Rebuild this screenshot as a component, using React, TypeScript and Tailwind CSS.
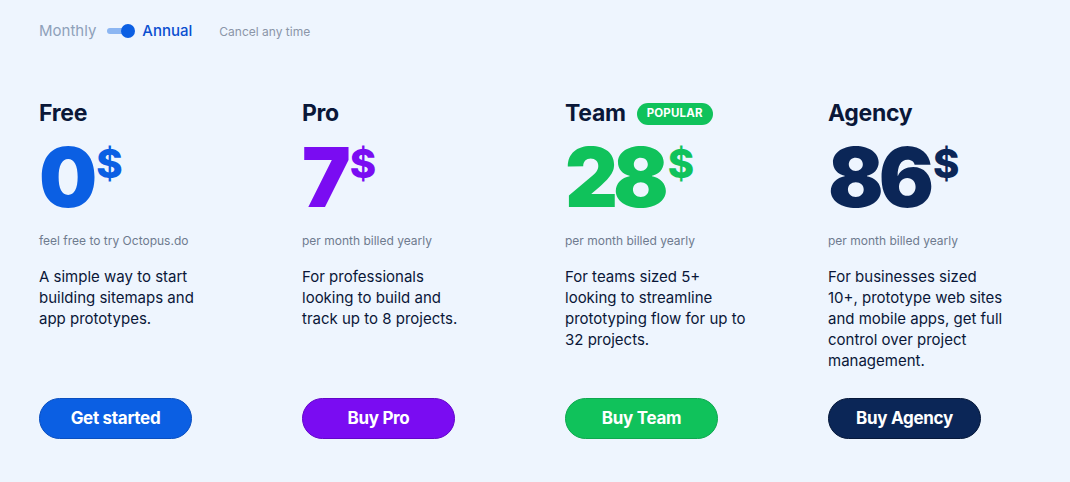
import React from "react";

type Plan = {
  name: string;
  price: string;
  color: string;
  sub: string;
  desc: string;
  descW: string;
  btn: string;
  btnBg: string;
  popular?: boolean;
};

const plans: Plan[] = [
  {
    name: "Free",
    price: "0",
    color: "text-[#0b5fe3]",
    sub: "feel free to try Octopus.do",
    desc: "A simple way to start building sitemaps and app prototypes.",
    descW: "w-[184px]",
    btn: "Get started",
    btnBg: "bg-[#0b5fe3] border-[#0a4fc0]",
  },
  {
    name: "Pro",
    price: "7",
    color: "text-[#7a0cf2]",
    sub: "per month billed yearly",
    desc: "For professionals looking to build and track up to 8 projects.",
    descW: "w-[170px]",
    btn: "Buy Pro",
    btnBg: "bg-[#7a0cf2] border-[#6306c9]",
  },
  {
    name: "Team",
    price: "28",
    color: "text-[#10c25b]",
    sub: "per month billed yearly",
    desc: "For teams sized 5+ looking to streamline prototyping flow for up to 32 projects.",
    descW: "w-[184px]",
    btn: "Buy Team",
    btnBg: "bg-[#10c25b] border-[#0ea84f]",
    popular: true,
  },
  {
    name: "Agency",
    price: "86",
    color: "text-[#0b2657]",
    sub: "per month billed yearly",
    desc: "For businesses sized 10+, prototype web sites and mobile apps, get full control over project management.",
    descW: "w-[178px]",
    btn: "Buy Agency",
    btnBg: "bg-[#0b2657] border-[#06183a]",
  },
];

export default function App() {
  return (
    <div
      className="w-[1070px] h-[482px] bg-[#eef5fe] overflow-hidden"
      style={{ fontFamily: "Inter, 'Noto Sans', sans-serif" }}
    >
      <div className="flex items-center pl-[39px] pt-[20px] h-[22px] box-content">
        <span className="text-[15px] text-[#8fa1ba]">Monthly</span>
        <div className="relative ml-[11px] w-[28px] h-[14px] flex items-center">
          <div className="w-[24px] h-[6px] rounded-full bg-[#8cb6f2]" />
          <div className="absolute right-0 top-0 w-[14px] h-[14px] rounded-full bg-[#0b5fe3]" />
        </div>
        <span className="ml-[7px] text-[15px] font-medium text-[#0a4fd0]">Annual</span>
        <span className="ml-[27px] text-[12px] text-[#8b96a8] mt-[1px]">Cancel any time</span>
      </div>

      <div className="flex pl-[39px] pt-[56px]">
        {plans.map((p) => (
          <div key={p.name} className="w-[263px] shrink-0 flex flex-col">
            <div className="flex items-center h-[30px]">
              <span className="text-[23px] font-bold text-[#0a1738] tracking-[-0.3px]">{p.name}</span>
              {p.popular && (
                <span className="ml-[11px] mt-[1px] h-[22px] px-[10px] rounded-full bg-[#10c25b] text-white text-[11.5px] font-bold flex items-center tracking-[0.2px]">
                  POPULAR
                </span>
              )}
            </div>
            <div className={`flex items-start h-[99px] mt-[4px] ${p.color}`}>
              <span className="text-[82px] font-black leading-none tracking-[-5px] mt-[5px]">{p.price}</span>
              <span className="text-[40px] font-extrabold leading-none ml-[4px] mt-[12px]">$</span>
            </div>
            <div className="text-[12px] text-[#6e7b8f] mt-[1px] h-[20px]">{p.sub}</div>
            <div className={`text-[15px] leading-[21px] text-[#0a1738] mt-[14px] h-[132px] ${p.descW}`}>{p.desc}</div>
            <div>
              <button
                className={`w-[153px] h-[41px] rounded-full border text-white text-[17px] font-bold tracking-[-0.3px] ${p.btnBg}`}
              >
                {p.btn}
              </button>
            </div>
          </div>
        ))}
      </div>
    </div>
  );
}
